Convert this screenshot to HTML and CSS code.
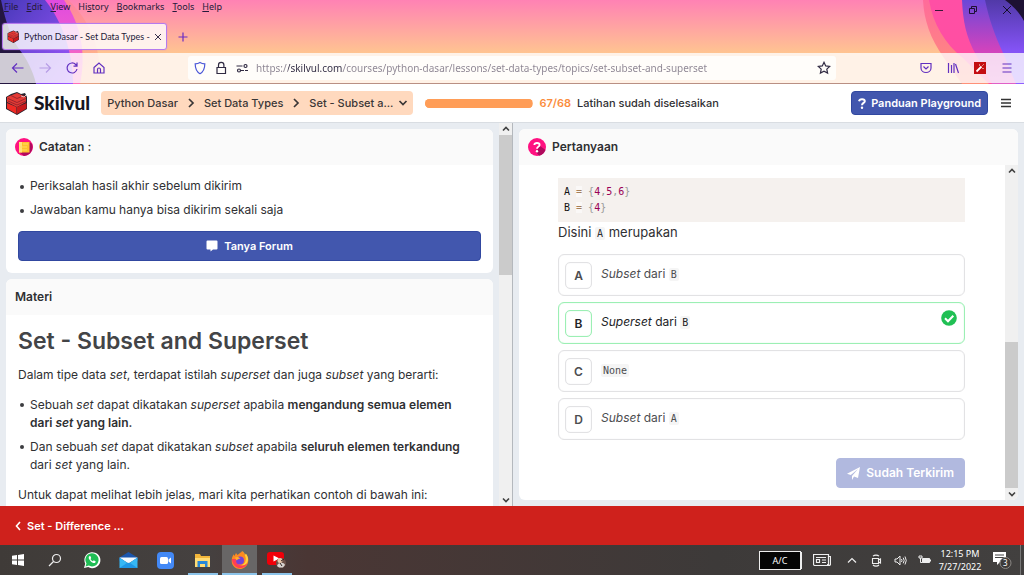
FILE: index.html
```html
<!DOCTYPE html>
<html lang="id">
<head>
<meta charset="utf-8">
<meta name="viewport" content="width=device-width, initial-scale=1">
<title>Python Dasar - Set Data Types - Skilvul</title>
<link rel="stylesheet" href="styles.css">
</head>
<body>
<svg class="defs" width="0" height="0" aria-hidden="true">
  <symbol id="cube" viewBox="0 0 24 24">
    <path d="M12 1l4 2 4-1 2 4v12l-10 6L1 18V6l5-3z" fill="#26242e"/>
    <path d="M2 6l10-4 9 4v5l-9 5-10-5z" fill="#e33a35"/>
    <path d="M2 12l9.500 4v7L2 17.500z" fill="#ef2b25"/>
    <path d="M21.500 12L12 16v7l9.500-5.500z" fill="#c81a1d"/>
    <path d="M3 7.500l9 4 9-4M3 10l9 4 9-4M6 4.500l6 3 7-3" fill="none" stroke="#8a2028" stroke-width=".8"/>
    <path d="M16 5l3 1 2-2" fill="none" stroke="#e8b8b8" stroke-width="1"/>
  </symbol>
  <symbol id="up" viewBox="0 0 12 12"><path d="M3 7.500l3-3 3 3" fill="none" stroke="#404040" stroke-width="1.600"/></symbol>
  <symbol id="down" viewBox="0 0 12 12"><path d="M3 4.500l3 3 3-3" fill="none" stroke="#404040" stroke-width="1.600"/></symbol>
  <symbol id="right" viewBox="0 0 12 12"><path d="M4 2l4 4-4 4" fill="none" stroke="#3a3636" stroke-width="1.700"/></symbol>
</svg>

<div class="browser">
  <svg class="art art-left" viewBox="0 0 120 84" aria-hidden="true">
    <defs>
      <linearGradient id="la" x1="0" y1="0" x2="1" y2="1"><stop offset="0" stop-color="#ff6a9a"/><stop offset="1" stop-color="#ffae83"/></linearGradient>
      <linearGradient id="lb" x1="0" y1="0" x2="0" y2="1"><stop offset="0" stop-color="#e04be0"/><stop offset="1" stop-color="#ff70b8"/></linearGradient>
      <linearGradient id="lc" x1="0" y1="0" x2="1" y2="1"><stop offset="0" stop-color="#4638b8"/><stop offset="1" stop-color="#a058ff"/></linearGradient>
    </defs>
    <path d="M0 0h68c22 20 34 50 32 84H0z" fill="url(#la)" opacity=".6"/>
    <path d="M0 0h64c18 26 22 55 16 84H0z" fill="url(#lb)"/>
    <path d="M0 0h45c18 22 28 54 28 84H0z" fill="url(#lc)"/>
    <path d="M0 0h1c5 24 11 39 18 49 7 9 14 21 17 35H0z" fill="#241640"/>
  </svg>
  <svg class="art art-right" viewBox="0 0 120 84" aria-hidden="true">
    <defs>
      <linearGradient id="ra" x1="0" y1="0" x2="0" y2="1"><stop offset="0" stop-color="#ff6b9a"/><stop offset="1" stop-color="#ff9078"/></linearGradient>
      <linearGradient id="rb" x1="0" y1="0" x2="0" y2="1"><stop offset="0" stop-color="#ff4fa5"/><stop offset="1" stop-color="#ff4fa0"/></linearGradient>
      <linearGradient id="rc" x1="0" y1="0" x2="0" y2="1"><stop offset="0" stop-color="#6a48d8"/><stop offset=".6" stop-color="#d143bd"/><stop offset="1" stop-color="#e060c8"/></linearGradient>
      <linearGradient id="rd" x1="0" y1="0" x2="0" y2="1"><stop offset="0" stop-color="#5139a8"/><stop offset=".6" stop-color="#8453f5"/><stop offset="1" stop-color="#9060ff"/></linearGradient>
    </defs>
    <path d="M19 0c1 20 7 38 21 58l18 26h62V0z" fill="url(#ra)"/>
    <path d="M25 0c4 24 16 44 34 58l26 26h35V0z" fill="url(#rb)"/>
    <path d="M58 0c1 21 4 37 14 55l16 29h32V0z" fill="url(#rc)"/>
    <path d="M81 0c4 19 10 36 18 53l13 31h8V0z" fill="url(#rd)"/>
    <path d="M101 0c8 6 14 12 19 21V0z" fill="#1d1133"/>
  </svg>

  <div class="menu-row">
    <nav class="menus" aria-label="Menu">
      <a href="#"><u>F</u>ile</a><a href="#"><u>E</u>dit</a><a href="#"><u>V</u>iew</a><a href="#">Hi<u>s</u>tory</a><a href="#"><u>B</u>ookmarks</a><a href="#"><u>T</u>ools</a><a href="#"><u>H</u>elp</a>
    </nav>
    <div class="window-controls">
      <button aria-label="Minimize"><svg width="10" height="10"><path d="M1 5.500h8" stroke="#3a1838" fill="none"/></svg></button>
      <button aria-label="Restore"><svg width="10" height="10"><path d="M1.500 3.500h5v5h-5zM3.500 3V1.500h5v5H7" stroke="#1d1133" fill="none"/></svg></button>
      <button aria-label="Close"><svg width="10" height="10"><path d="M1 1l8 8M9 1L1 9" stroke="#15102a" fill="none"/></svg></button>
    </div>
  </div>
  <div class="tab-row">
    <div class="tab">
      <svg width="13" height="13"><use href="#cube"/></svg>
      <span class="tab-title">Python Dasar - Set Data Types -</span>
      <button aria-label="Close tab"><svg width="8" height="8"><path d="M1 1l6 6M7 1L1 7" stroke="#38304c" fill="none"/></svg></button>
    </div>
    <button class="new-tab" aria-label="New tab"><svg width="10" height="10"><path d="M5 .5v9M.5 5h9" stroke="#6a2cc4" stroke-width="1.200" fill="none"/></svg></button>
  </div>
  <div class="nav-row">
    <button aria-label="Back"><svg class="line" width="14" height="14"><path d="M12.500 7h-11M6 2.500L1.500 7 6 11.500"/></svg></button>
    <button aria-label="Forward" disabled><svg class="line" width="14" height="14"><path d="M1.500 7h11M8 2.500L12.500 7 8 11.500"/></svg></button>
    <button aria-label="Reload"><svg class="line" width="14" height="14"><path d="M12 8a5 5 0 1 1-1.300-4.500L12 5M12 1.500V5.200H8.500"/></svg></button>
    <button aria-label="Home"><svg class="line" width="14" height="14"><path d="M2 6.500l5-4.500 5 4.500V12H2zM5.500 12V8.500a1.500 1.500 0 0 1 3 0V12"/></svg></button>
    <div class="url-bar">
      <svg class="line shield" width="14" height="14"><path d="M7 1.500c1.500 1 3 1.300 4.800 1.300 0 5-1.500 8.200-4.800 9.900C3.700 11 2.200 7.800 2.200 2.800 4 2.800 5.500 2.500 7 1.500z"/></svg>
      <svg class="line dark" width="14" height="14"><path d="M3 6.500h8.500v6H3zM4.500 6.500V4a2.700 2.700 0 0 1 5.400 0v2.500"/></svg>
      <svg class="line dark" width="14" height="14"><path d="M1.500 5h6M10 9.500h3M6 9.500h3"/><circle cx="10.500" cy="5" r="1.500"/><circle cx="4" cy="9.500" r="1.500"/></svg>
      <input class="url" type="text" aria-label="Address" value="https://skilvul.com/courses/python-dasar/lessons/set-data-types/topics/set-subset-and-superset">
      <button aria-label="Bookmark"><svg class="line dark" width="14" height="14"><path d="M7 1.300l1.700 3.600 4 .5-2.900 2.700.8 4L7 10.200l-3.600 1.900.8-4L1.300 5.400l4-.5z"/></svg></button>
    </div>
    <button aria-label="Pocket"><svg class="line" width="14" height="14"><path d="M2 2.500h10V7c0 6-10 6-10 0zM4.500 5.500L7 8l2.500-2.500"/></svg></button>
    <button aria-label="Library"><svg class="line" width="14" height="14"><path d="M2.500 2v10M5.500 4v8M8 2v10M9.500 3l3 9"/></svg></button>
    <button aria-label="Extension"><svg width="12" height="12"><path d="M0 0h12v12H0z" fill="#c40d12"/><path d="M2.500 9.500L7.500 4.500" stroke="#fff" stroke-width="1.800"/><path d="M8.500 3.500l1-1M5 3h1M9 6v1" stroke="#fff"/></svg></button>
    <button aria-label="Application menu"><svg class="line" width="12" height="12"><path d="M1.500 2h9M1.500 6h9M1.500 10h9"/></svg></button>
  </div>
</div>

<header class="app-header">
  <a class="brand" href="#"><svg width="24" height="24"><use href="#cube"/></svg><span>Skilvul</span></a>
  <nav class="crumbs" aria-label="Breadcrumb">
    <a href="#">Python Dasar</a><svg width="12" height="12"><use href="#right"/></svg>
    <a href="#">Set Data Types</a><svg width="12" height="12"><use href="#right"/></svg>
    <button class="crumb-pick">Set - Subset a...<svg width="12" height="12" viewBox="0 0 12 12"><path d="M2.500 4L6 7.500 9.500 4" fill="none" stroke="#3a3636" stroke-width="1.700"/></svg></button>
  </nav>
  <progress class="meter" max="68" value="67" aria-label="Latihan"></progress>
  <p class="count"><strong>67/68</strong>Latihan sudah diselesaikan</p>
  <button class="primary guide"><svg width="8" height="11" viewBox="0 0 8 11"><path d="M1 3.300C1.300 1.700 2.400 1.200 4 1.200c1.700 0 2.800.8 2.800 2C6.800 5 4 4.900 4 7.300" fill="none" stroke="#fff" stroke-width="2"/><circle cx="4" cy="9.700" r="1.200" fill="#fff"/></svg>Panduan Playground</button>
  <button class="plain" aria-label="Menu"><svg width="10" height="10"><path d="M0 1.500h10M0 5h10M0 8.500h10" stroke="#333" stroke-width="1.500"/></svg></button>
</header>

<main class="workspace">
  <section class="lesson">
    <div class="lesson-cards">
      <article class="card">
        <h2 class="card-head"><svg width="18" height="18" viewBox="0 0 18 18"><circle cx="9" cy="9" r="9" fill="#ff1181"/><path d="M14.500 4l2.500 2a9 9 0 0 1-8 12l-5-4z" fill="#b00a5d"/><path d="M4 4h10.500v10.500H4z" fill="#ffc12e"/><path d="M4 4h3v10.500H4z" fill="#ffe27a"/><path d="M8 6h5M5 9h7M7 12h5" stroke="#ffdc62"/></svg>Catatan :</h2>
        <div class="notes">
          <ul>
            <li>Periksalah hasil akhir sebelum dikirim</li>
            <li>Jawaban kamu hanya bisa dikirim sekali saja</li>
          </ul>
          <button class="primary forum"><svg width="12" height="12" viewBox="0 0 12 12"><path d="M1.500.5h9a1 1 0 0 1 1 1v7a1 1 0 0 1-1 1H7L4.500 11.500v-2h-3a1 1 0 0 1-1-1v-7a1 1 0 0 1 1-1z" fill="#fff"/></svg>Tanya Forum</button>
        </div>
      </article>
      <article class="card">
        <h2 class="card-head">Materi</h2>
        <div class="reading">
          <h1>Set - Subset and Superset</h1>
          <p>Dalam tipe data <em>set</em>, terdapat istilah <em>superset</em> dan juga <em>subset</em> yang berarti:</p>
          <ul>
            <li>Sebuah <em>set</em> dapat dikatakan <em>superset</em> apabila <strong>mengandung semua elemen dari <em>set</em> yang lain.</strong></li>
            <li>Dan sebuah <em>set</em> dapat dikatakan <em>subset</em> apabila <strong>seluruh elemen terkandung</strong> dari <em>set</em> yang lain.</li>
          </ul>
          <p>Untuk dapat melihat lebih jelas, mari kita perhatikan contoh di bawah ini:</p>
        </div>
      </article>
    </div>
    <div class="scroll scroll-lesson" aria-hidden="true">
      <svg width="12" height="12"><use href="#up"/></svg>
      <div class="track"><div class="thumb"></div></div>
      <svg width="12" height="12"><use href="#down"/></svg>
    </div>
  </section>

  <section class="question">
    <div class="card question-card">
      <h2 class="card-head"><svg width="18" height="18" viewBox="0 0 18 18"><circle cx="9" cy="9" r="9" fill="#ff1181"/><path d="M12 8l5.500 4A9 9 0 0 1 11 17.800L8 14z" fill="#b00a5d"/><path d="M6.300 7C6.500 5.500 7.500 5 9 5c1.600 0 2.600.7 2.600 1.900C11.600 8.700 9 8.600 9 10.800" fill="none" stroke="#fff" stroke-width="1.800"/><circle cx="9" cy="13.200" r="1.200" fill="#fff"/></svg>Pertanyaan</h2>
      <div class="question-main">
        <div class="question-body">
          <pre class="code">A <i class="op">=</i> <i class="br">{</i><i>4</i><i class="br">,</i><i>5</i><i class="br">,</i><i>6</i><i class="br">}</i>
B <i class="op">=</i> <i class="br">{</i><i>4</i><i class="br">}</i></pre>
          <p class="ask">Disini <code>A</code> merupakan</p>
          <div class="options">
            <button class="option"><b>A</b><span><em>Subset</em> dari <code>B</code></span></button>
            <button class="option chosen"><b>B</b><span><em>Superset</em> dari <code>B</code></span><svg class="tick" width="16" height="16" viewBox="0 0 16 16"><circle cx="8" cy="8" r="7.800" fill="#20c054"/><path d="M4 8.200l3 3 5.300-5.500" fill="none" stroke="#fff" stroke-width="2"/></svg></button>
            <button class="option"><b>C</b><span><code>None</code></span></button>
            <button class="option"><b>D</b><span><em>Subset</em> dari <code>A</code></span></button>
          </div>
          <button class="primary sent" disabled><svg width="13" height="13" viewBox="0 0 13 13"><path d="M13 0l-2 11-4-1.600L5 13V9l6-7-7.200 6L0 6.800z" fill="#fff"/></svg>Sudah Terkirim</button>
        </div>
        <div class="scroll scroll-question" aria-hidden="true">
          <svg width="12" height="12"><use href="#up"/></svg>
          <div class="track"><div class="thumb"></div></div>
          <svg width="12" height="12"><use href="#down"/></svg>
        </div>
      </div>
    </div>
  </section>
</main>

<footer class="lesson-nav">
  <a href="#"><svg width="6" height="10"><path d="M5 1L1.500 5 5 9" fill="none" stroke="#fff" stroke-width="1.600"/></svg>Set - Difference ...</a>
</footer>

<div class="taskbar">
  <div class="apps">
    <button aria-label="Start"><svg width="14" height="14"><path d="M1 2.800l5-.8v4.600H1zM7 1.900l6-.9v5.600H7zM1 7.500h5V12l-5-.8zM7 7.500h6V13l-6-.9z" fill="#fff"/></svg></button>
    <button aria-label="Search"><svg width="14" height="14"><circle cx="8.500" cy="5.500" r="4" fill="none" stroke="#eee" stroke-width="1.200"/><path d="M5.500 8.500L1 13" stroke="#eee" stroke-width="1.300"/></svg></button>
    <button aria-label="WhatsApp"><svg width="18" height="18" viewBox="0 0 18 18"><path d="M1 17l1.200-4.300A8 8 0 1 1 5.200 16z" fill="#fff"/><path d="M2.500 15.500l1-3A6.600 6.600 0 1 1 5.800 14.600z" fill="#20bd55"/><path d="M6.500 5c-1.500 1-.8 3 1 5 2 2.200 4 2.800 5 1.200.4-.8.200-1-.5-1.300l-1.200-.6-1 1C8.500 9.800 8 9 7.500 8l.7-.9-.7-1.900z" fill="#fff"/></svg></button>
    <button aria-label="Mail"><svg width="19" height="18" viewBox="0 0 19 18"><path d="M.5 6.500l9-5.500 9 5.500V10H.5z" fill="#1b56ad"/><path d="M.5 6.500h18l-9 6z" fill="#f5fafe"/><path d="M.5 6.500l9 6 9-6V17H.5z" fill="#36b8f5"/><path d="M.5 17l9-6 9 6z" fill="#1f97e6"/><path d="M2 7h15l-7.500 5z" fill="#f5fafe"/></svg></button>
    <button aria-label="Zoom"><svg width="17" height="17"><rect width="17" height="17" rx="4" fill="#4389f6"/><rect x="3" y="5" width="8" height="7" rx="1.500" fill="#fff"/><path d="M11.500 7.500L14 5.500v6l-2.500-2z" fill="#fff"/></svg></button>
    <button class="open" aria-label="File Explorer"><svg width="17" height="15"><path d="M1 1h5l1 2h9v11H1z" fill="#f3b63a"/><path d="M1 5h15v9H1z" fill="#ffdc75"/><path d="M3.500 8h10v6H11v-3H6v3H3.500z" fill="#2788d8"/></svg></button>
    <button class="open active" aria-label="Firefox"><svg width="18" height="18" viewBox="0 0 18 18"><path d="M9 2c1-.5 1.500-1 2-2 2 1.500 2.500 2.500 3 4 .7-.3.800-.8.800-1.300C17 5 18 8 17 11.500 16 15.500 12.500 18 9 18c-4.500 0-8.300-3.500-8.300-8C.7 7 1.500 5 2.700 3.200L3.500 5 5 2l1.500 2z" fill="#ff8a20"/><path d="M11 0c2 1.500 3 4 3.500 6 1 4-1 8-4.500 8 5 1 7-2.500 7-6 0-2-1-4-2.200-5.300L14 4c-.5-1.700-1.200-3-3-4z" fill="#ffd33d"/><path d="M1 8c0 6 5 9.500 9 9 4-.4 6-3 6.500-5-3 3.500-8 3.500-10 0L5 8z" fill="#ff3e55"/><circle cx="9" cy="9.500" r="4" fill="#7442d8"/><path d="M4 6.500c2-1 4-.5 5.500 1-2 0-3 1-4 2z" fill="#ffad2d"/></svg></button>
    <button class="open" aria-label="YouTube"><svg width="20" height="18" viewBox="0 0 20 18"><rect y="1" width="17" height="13" rx="3" fill="#f00009"/><path d="M6.500 4.500l6 3-6 3z" fill="#fff"/><circle cx="14" cy="12" r="5" fill="#6c5148"/><circle cx="13" cy="9.500" r="2.500" fill="#e9c6a8"/><path d="M10 15c1-4 7-4 8-1l-2 2.500h-4z" fill="#d9d5d2"/><path d="M13 12l2 3M17 8l-3 2" stroke="#322522"/></svg></button>
  </div>
  <div class="tray">
    <div class="power">A/C</div>
    <button class="news" aria-label="News"><svg width="18" height="12"><path d="M.5.5h15v11H2a1.500 1.500 0 0 1-1.500-1.500zM15.500 2.500h2V10a1.500 1.500 0 0 1-3 0M3 3.500h10M9 6h4M9 8.500h4M3.500 5.500h3v3h-3z" fill="none" stroke="#eee" stroke-width="1.200"/></svg></button>
    <button aria-label="Show hidden icons"><svg width="10" height="7"><path d="M1 5.500l4-4 4 4" fill="none" stroke="#eee" stroke-width="1.200"/></svg></button>
    <button aria-label="Meet now"><svg width="11" height="13"><path d="M1.500 4.500h6v5h-6zM7.500 6L9.500 5v4l-2-1M2 2.200c1.500-1.500 4.500-1.500 6 0M2 11c1.500 1.500 4.500 1.500 6 0" fill="none" stroke="#eee" stroke-width="1.100"/></svg></button>
    <button aria-label="Volume"><svg width="13" height="11"><path d="M1 4h2l3-3v9L3 7H1zM7.500 4q1 1.500 0 3M9.200 2.700q2 2.800 0 5.600M11 1.500q2.500 4 0 8" fill="none" stroke="#eee"/></svg></button>
    <button aria-label="Battery"><svg width="13" height="10"><path d="M4.500 3.500h7v4h-7z" fill="#eee" stroke="#eee"/><path d="M12.500 4.500v2" stroke="#eee"/><path d="M1 1h3v2H1zM2.500 3v4.500h2" fill="none" stroke="#eee"/></svg></button>
    <div class="clock"><time>12:15 PM</time><time>7/27/2022</time></div>
    <button class="notice" aria-label="Notifications"><svg width="20" height="20"><path d="M1 2h13v10H8l-3 3v-3H1z" fill="#fff"/><path d="M3 5h9M3 7.500h9" stroke="#444"/><circle cx="13.500" cy="13" r="5.500" fill="#3d3a38" stroke="#8a8784"/></svg><span class="badge">3</span></button>
  </div>
</div>
</body>
</html>
```
FILE: styles.css
```css
* { box-sizing: border-box; }
body {
  margin: 0;
  height: 100vh;
  display: flex;
  flex-direction: column;
  overflow: hidden;
  background: #e8ecf1;
  color: #2f3033;
  font: 12px/18px Inter, "Liberation Sans", sans-serif;
}
button {
  margin: 0;
  padding: 0;
  border: 0;
  background: none;
  font: inherit;
  color: inherit;
  display: flex;
  align-items: center;
  justify-content: center;
}
a { color: inherit; text-decoration: none; }
svg { flex: none; display: block; }
h1, h2, p, ul { margin: 0; }
.defs { position: absolute; }

/* Browser window */
.browser {
  position: relative;
  flex: none;
  background: linear-gradient(#ff82b4, #ffc491 53px);
  border-bottom: 1px solid #b98f83;
  font: 9px/13px "Noto Sans", "Open Sans", sans-serif;
  color: #241a3a;
}
.art { position: absolute; top: 0; width: 120px; height: 84px; }
.art-left { left: 0; }
.art-right { right: 0; }
.menu-row, .tab-row, .nav-row { position: relative; display: flex; }
.menu-row { height: 20px; justify-content: space-between; }
.menus { display: flex; gap: 8px; padding-left: 4px; }
.window-controls { display: flex; }
.window-controls button { width: 34px; height: 19px; }
.tab-row { height: 33px; padding: 3px 2px; }
.tab {
  display: flex;
  align-items: center;
  gap: 4px;
  width: 165px;
  height: 27px;
  padding: 0 7px 0 4px;
  border: 1px solid #b57aee;
  border-radius: 3px;
  background: rgba(255, 255, 255, .82);
  box-shadow: 0 0 1px #b57aee;
}
.tab-title { flex: 1; white-space: nowrap; font-family: Lato, "Noto Sans", sans-serif; }
.new-tab { width: 32px; height: 27px; }
.nav-row {
  height: 30px;
  padding: 0 4px;
  align-items: center;
  background: rgba(255, 255, 255, .78);
}
.nav-row > button { width: 27px; height: 30px; }
.nav-row > button:disabled { opacity: .35; }
.line { fill: none; stroke: #6230c0; stroke-width: 1.2; }
.shield { stroke: #4a57d8; }
.dark { stroke: #302a42; }
.url-bar {
  flex: 1;
  height: 24px;
  margin: 0 76px;
  padding: 0 5px;
  display: flex;
  align-items: center;
  gap: 7px;
  border-radius: 3px;
  background: rgba(255, 255, 255, .8);
}
/* The host name is darker than the rest of the address */
.url {
  flex: 1;
  min-width: 0;
  padding: 0;
  border: 0;
  outline: 0;
  font: 10px/14px "Noto Sans", "Open Sans", sans-serif;
  color: transparent;
  background: linear-gradient(90deg, #8b8391 32px, #302a42 32px 87px, #8b8391 87px);
  -webkit-background-clip: text;
  background-clip: text;
}

/* Course header */
.app-header {
  flex: none;
  display: flex;
  align-items: center;
  height: 39px;
  padding: 0 13px 0 5px;
  background: #fff;
  border-bottom: 1px solid #d9dde2;
  font-size: 11px;
  font-weight: 500;
}
.brand { display: flex; align-items: center; gap: 5px; color: #16161f; font: 900 19px/24px Lato, sans-serif; }
.crumbs {
  display: flex;
  align-items: center;
  gap: 7px;
  height: 24px;
  margin: 0 12px 0 11px;
  padding: 0 4px 0 6px;
  border-radius: 4px;
  background: #ffd9be;
  color: #3a3636;
  white-space: nowrap;
}
.crumb-pick { gap: 4px; }
.meter {
  appearance: none;
  width: 108px;
  height: 9px;
  border: 0;
  border-radius: 5px;
  overflow: hidden;
}
.meter::-webkit-progress-bar { background: #ffb37a; }
.meter::-webkit-progress-value { background: #ff9d57; }
.count { display: flex; gap: 6px; margin: 0 auto 0 6px; white-space: nowrap; }
.count strong { color: #fb8c3c; font-weight: 600; }
.primary {
  gap: 6px;
  border: 1px solid #3148a0;
  border-radius: 4px;
  background: #4257ae;
  color: #fff;
  font-weight: 600;
}
.guide { height: 24px; padding: 0 6px; gap: 5px; }
.plain { margin-left: 13px; height: 24px; }

/* Workspace */
.workspace { flex: 1; min-height: 0; display: flex; }
.lesson { flex: 1; min-width: 0; display: flex; border-right: 1px solid #b4b8bd; }
.lesson-cards {
  flex: 1;
  min-width: 0;
  display: flex;
  flex-direction: column;
  gap: 6px;
  padding: 6px 6px 0;
  overflow: hidden;
}
.card { flex: none; border-radius: 6px; background: #fff; overflow: hidden; }
.card-head {
  display: flex;
  align-items: center;
  gap: 6px;
  height: 36px;
  padding: 0 9px;
  background: #fafafa;
  font-size: 12px;
  font-weight: 600;
}
.notes { padding: 9px 12px 12px; }
.notes ul, .reading ul { padding-left: 12px; list-style: none; }
.notes li, .reading li { position: relative; }
.notes li::before, .reading li::before {
  content: "";
  position: absolute;
  left: -10px;
  top: 7px;
  width: 4px;
  height: 4px;
  border-radius: 50%;
  background: #3c3d40;
}
.notes li { line-height: 24px; }
.notes li::before { top: 11px; }
.forum { width: 100%; height: 30px; margin-top: 9px; font-size: 11px; }
.reading { padding: 11px 20px 11px 12px; }
.reading h1 { margin-bottom: 10px; color: #434447; font-size: 23px; line-height: 30px; font-weight: 600; }
.reading ul { margin: 12px 0; }
.reading li + li { margin-top: 6px; }
strong { font-weight: 600; }

.scroll { flex: none; display: flex; flex-direction: column; align-items: center; width: 13px; background: #f0f0f0; }
.track { flex: 1; width: 100%; display: flex; flex-direction: column; }
.thumb { background: #cbcbcb; }
.scroll-lesson .thumb { height: 39%; }
.scroll-question .track { justify-content: flex-end; }
.scroll-question .thumb { height: 47%; }

.question { flex: 1; min-width: 0; max-width: 511px; display: flex; padding: 6px; }
.question-card { flex: 1; display: flex; flex-direction: column; }
.question-main { flex: 1; min-height: 0; display: flex; }
.question-body { flex: 1; min-width: 0; padding: 13px 40px 12px 39px; }
code, .code { font-family: "DejaVu Sans Mono", "Liberation Mono", monospace; font-size: 10px; }
.code {
  margin: 0;
  padding: 6px;
  background: #f5f1ee;
  color: #111;
  line-height: 16px;
}
.code i { font-style: normal; color: #990055; }
.code .op { color: #a67f59; background: rgba(255, 255, 255, .5); }
.code .br { color: #999; }
code { padding: 1px 2px; border-radius: 2px; background: #f5f5f5; }
.ask { font-size: 13px; line-height: 20px; }
.options { display: flex; flex-direction: column; gap: 6px; margin: 12px 0 18px; }
.ask + .options { margin-top: 10px; }
.option {
  position: relative;
  justify-content: flex-start;
  gap: 9px;
  height: 42px;
  padding: 0 6px;
  border: 1px solid #e2e2e4;
  border-radius: 6px;
  color: #4c4d50;
  text-align: left;
  box-shadow: inset 0 0 1px #e2e2e4;
}
.option span { padding-bottom: 2px; }
.option b {
  width: 27px;
  height: 27px;
  border: 1px solid #e2e2e4;
  border-radius: 5px;
  box-shadow: inset 0 0 1px #e2e2e4;
  text-align: center;
  line-height: 26px;
  font-weight: 600;
}
.option.chosen { border-color: #9cefb4; color: #222326; box-shadow: inset 0 0 1px #9cefb4; }
.chosen b { border-color: #9cefb4; box-shadow: inset 0 0 1px #9cefb4; }
.tick { position: absolute; top: 7px; right: 7px; }
.sent { height: 30px; margin-left: auto; padding: 0 10px; border-color: #b1b9df; background: #b1b9df; font-size: 12px; }

.lesson-nav { flex: none; display: flex; align-items: center; height: 39px; padding: 0 15px; background: #cf211c; color: #fff; font-size: 11px; font-weight: 600; }
.lesson-nav a { display: flex; align-items: center; gap: 6px; }

/* Desktop taskbar */
.taskbar {
  flex: none;
  display: flex;
  justify-content: space-between;
  height: 30px;
  background: linear-gradient(90deg, #3f3b38, #454140 20%, #4a3634 30%, #3d3a39 70%, #42403f);
  color: #fff;
  font: 9px/13px "Noto Sans", "Open Sans", sans-serif;
}
.apps, .tray { display: flex; align-items: stretch; }
.apps button { width: 37px; }
.apps button:first-child { width: 36px; }
.apps .open { background: linear-gradient(#8cc4ea, #8cc4ea) center bottom / 30px 2px no-repeat; }
.apps .active { width: 35px; margin: 0 1px; background: linear-gradient(#8cc4ea, #8cc4ea) bottom / 100% 2px no-repeat #686666; }
.tray { align-items: center; margin-right: 3px; border-right: 1px solid #777; }
.tray button { width: 24px; height: 30px; }
.tray .news { width: 36px; }
.power {
  width: 42px;
  height: 19px;
  margin: 0 3px;
  border: 1px solid #eee;
  background: #050505;
  text-align: center;
  line-height: 17px;
  box-shadow: 2px 0 0 -1px #eee;
}
.clock { width: 48px; display: flex; flex-direction: column; align-items: center; }
.tray .notice { position: relative; width: 36px; }
.badge { position: absolute; left: 19px; top: 12px; font-size: 8px; line-height: 12px; }
```
